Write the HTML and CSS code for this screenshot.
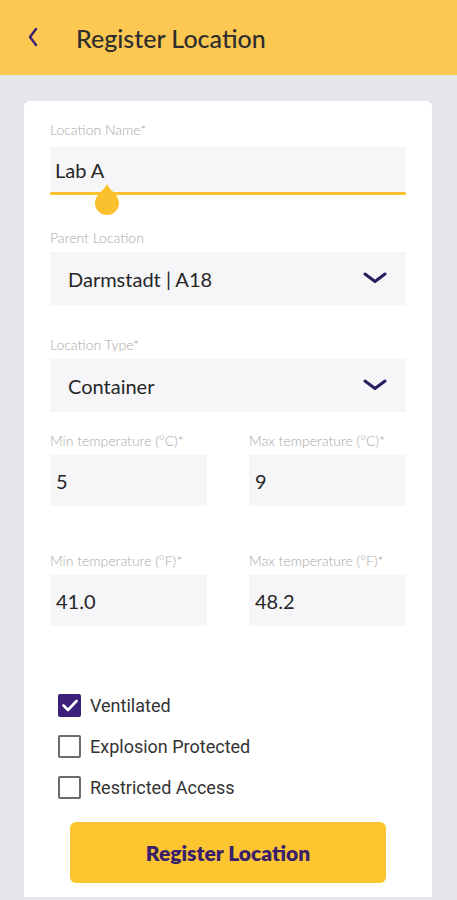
FILE: index.html
```html
<!DOCTYPE html>
<html>
	<head>
		<meta charset="utf-8">
		<title>Register Location</title>
		<link rel="stylesheet" href="styles.css">
	</head>
	<body>
		<!-- top bar -->
		<div class="topbar">
			<svg class="back" width="12" height="20" viewBox="0 0 12 20">
				<path d="M9 2 L3 10 L9 18" fill="none" stroke="#3d1f73" stroke-width="2.4" stroke-linecap="round" stroke-linejoin="round"/>
			</svg>
			<h1 class="title">Register Location</h1>
		</div>

		<div class="page">
			<div class="card">

				<div class="field first">
					<div class="label">Location Name*</div>
					<div class="box text-input">
						<span class="value">Lab A</span>
						<div class="underline"></div>
						<svg class="handle" width="28" height="32" viewBox="0 0 28 32">
							<path d="M14 0 C17 7 26 10 26 19 A12 12 0 0 1 2 19 C2 10 11 7 14 0 Z" fill="#fbc02d"/>
						</svg>
					</div>
				</div>

				<div class="field">
					<div class="label">Parent Location</div>
					<div class="box select">
						<span class="value">Darmstadt | A18</span>
						<svg class="chev" width="24" height="12" viewBox="0 0 24 12">
							<path d="M2 2 L12 9.5 L22 2" fill="none" stroke="#2b1b5e" stroke-width="3" stroke-linecap="round" stroke-linejoin="round"/>
						</svg>
					</div>
				</div>

				<div class="field">
					<div class="label">Location Type*</div>
					<div class="box select">
						<span class="value">Container</span>
						<svg class="chev" width="24" height="12" viewBox="0 0 24 12">
							<path d="M2 2 L12 9.5 L22 2" fill="none" stroke="#2b1b5e" stroke-width="3" stroke-linecap="round" stroke-linejoin="round"/>
						</svg>
					</div>
				</div>

				<div class="row celsius">
					<div class="field">
						<div class="label">Min temperature (°C)*</div>
						<div class="box num"><span class="value">5</span></div>
					</div>
					<div class="field">
						<div class="label">Max temperature (°C)*</div>
						<div class="box num"><span class="value">9</span></div>
					</div>
				</div>

				<div class="row">
					<div class="field">
						<div class="label">Min temperature (°F)*</div>
						<div class="box num"><span class="value">41.0</span></div>
					</div>
					<div class="field">
						<div class="label">Max temperature (°F)*</div>
						<div class="box num"><span class="value">48.2</span></div>
					</div>
				</div>

				<!-- checkboxes -->
				<div class="checks">
					<div class="check">
						<span class="cb on">
							<svg width="16" height="13" viewBox="0 0 16 13">
								<path d="M1.5 6.5 L6 11 L14.5 2" fill="none" stroke="#fff" stroke-width="2.6" stroke-linecap="round" stroke-linejoin="round"/>
							</svg>
						</span>
						<span>Ventilated</span>
					</div>
					<div class="check">
						<span class="cb"></span>
						<span>Explosion Protected</span>
					</div>
					<div class="check">
						<span class="cb"></span>
						<span>Restricted Access</span>
					</div>
				</div>

				<button class="submit">Register Location</button>
			</div>
		</div>
	</body>
</html>
```

FILE: styles.css
```css
body {
	margin: 0;
	background-color: #e6e6eb;
	font-family: Lato, "Noto Sans", sans-serif;
	color: #2b2b2b;
}

/* 顶部栏 */
.topbar {
	height: 75px;
	background-color: #fcc852;
	display: flex;
	align-items: center;
	padding-left: 27px;
}

.back {
	display: block;
	margin-top: -1px;
}

.title {
	margin: 0 0 0 37px;
	font-size: 25px;
	font-weight: 500;
	color: #2e2e2e;
}

.page {
	padding: 26px 25px 4px 24px;
}

/* 白色卡片 */
.card {
	background-color: #fff;
	border-radius: 6px 6px 0 0;
	padding: 21px 26px 13px 26px;
	min-height: 762px;
}

.field {
	margin-top: 32px;
}

.field.first {
	margin-top: 0;
}

.field.first + .field {
	margin-top: 35px;
}

.label {
	font-size: 14px;
	font-weight: 300;
	line-height: 16px;
	color: #a8a8a8;
	margin-bottom: 6px;
}

.first .label {
	margin-bottom: 9px;
}

.box {
	background-color: #f6f6f9;
	display: flex;
	align-items: center;
	position: relative;
}

.value {
	font-size: 20px;
	color: #262626;
}

/* 输入框 */
.text-input {
	height: 48px;
	padding-left: 5px;
}

.text-input .value {
	margin-top: -3px;
}

.underline {
	position: absolute;
	left: 0;
	right: 0;
	bottom: 0;
	height: 3px;
	background-color: #fbc02d;
	border-radius: 2px;
}

.handle {
	position: absolute;
	left: 43px;
	top: 37px;
}

/* 下拉框 */
.select {
	height: 53px;
	padding: 0 19px 0 18px;
	justify-content: space-between;
}

.select .chev {
	margin-top: -2px;
}

/* 温度两列 */
.row {
	display: grid;
	grid-template-columns: 1fr 1fr;
	column-gap: 42px;
	margin-top: 47px;
}

.row.celsius {
	margin-top: 21px;
}

.row .field {
	margin-top: 0;
}

.num {
	height: 51px;
	padding-left: 6px;
}

/* 复选框 */
.checks {
	margin-top: 68px;
	padding-left: 8px;
	font-family: Roboto, "Noto Sans", sans-serif;
	font-size: 18px;
	color: #333;
}

.check {
	display: flex;
	align-items: center;
	height: 23px;
	margin-bottom: 18px;
}

.cb {
	width: 19px;
	height: 19px;
	border: 2px solid #6b6b6b;
	border-radius: 2px;
	margin-right: 9px;
	display: flex;
	align-items: center;
	justify-content: center;
}

.cb.on {
	background-color: #3b1f7a;
	border-color: #3b1f7a;
}

/* 按钮 */
.submit {
	display: block;
	width: 316px;
	height: 61px;
	margin: 23px 0 0 20px;
	border: none;
	border-radius: 6px;
	background-color: #fdc530;
	font-family: Lato, "Noto Sans", sans-serif;
	font-size: 21px;
	font-weight: 800;
	color: #3a1f6b;
}
```
